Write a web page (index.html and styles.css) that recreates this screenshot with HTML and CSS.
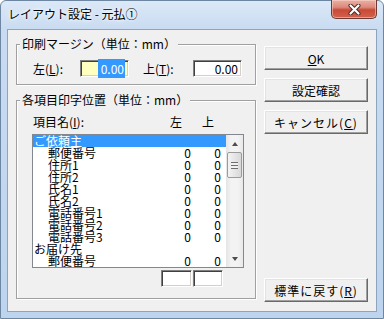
FILE: index.html
```html
<!DOCTYPE html>
<html lang="ja">
<head>
    <meta charset="UTF-8">
    <meta name="viewport" content="width=device-width, initial-scale=1.0">
    <title>レイアウト設定 - 元払①</title>
    <link rel="stylesheet" href="styles.css">
</head>
<body>

    <div class="window">
        <div class="titlebar">
            <span class="title">レイアウト設定 - 元払①</span>
            <span class="close-btn">
                <svg width="13" height="11" viewBox="0 0 13 11">
                    <path d="M2.5 1.5 L10.5 9.5 M10.5 1.5 L2.5 9.5" stroke="#4a2420" stroke-width="4" stroke-linecap="round"/>
                    <path d="M2.5 1.5 L10.5 9.5 M10.5 1.5 L2.5 9.5" stroke="#ffffff" stroke-width="2.2" stroke-linecap="round"/>
                </svg>
            </span>
        </div>

        <div class="client">
            <div class="left-col">
                <fieldset class="group group-margin">
                    <legend>印刷マージン（単位：mm）</legend>
                    <div class="margin-row">
                        <label class="lbl lbl-left">左(<u>L</u>):</label>
                        <span class="edit edit-focus"><span class="sel">0.00</span></span>
                        <label class="lbl lbl-top">上(<u>T</u>):</label>
                        <span class="edit">0.00</span>
                    </div>
                </fieldset>

                <fieldset class="group group-items">
                    <legend>各項目印字位置（単位：mm）</legend>
                    <div class="items-body">
                        <div class="list-head">
                            <span class="head-name">項目名(<u>I</u>):</span>
                            <span class="head-col">左</span>
                            <span class="head-col">上</span>
                        </div>

                        <div class="listbox">
                            <ul class="rows">
                                <li class="row selected"><span class="name">ご依頼主</span></li>
                                <li class="row child"><span class="name">郵便番号</span><span class="val">0</span><span class="val">0</span></li>
                                <li class="row child"><span class="name">住所1</span><span class="val">0</span><span class="val">0</span></li>
                                <li class="row child"><span class="name">住所2</span><span class="val">0</span><span class="val">0</span></li>
                                <li class="row child"><span class="name">氏名1</span><span class="val">0</span><span class="val">0</span></li>
                                <li class="row child"><span class="name">氏名2</span><span class="val">0</span><span class="val">0</span></li>
                                <li class="row child"><span class="name">電話番号1</span><span class="val">0</span><span class="val">0</span></li>
                                <li class="row child"><span class="name">電話番号2</span><span class="val">0</span><span class="val">0</span></li>
                                <li class="row child"><span class="name">電話番号3</span><span class="val">0</span><span class="val">0</span></li>
                                <li class="row"><span class="name">お届け先</span></li>
                                <li class="row child"><span class="name">郵便番号</span><span class="val">0</span><span class="val">0</span></li>
                            </ul>
                            <div class="vscroll">
                                <div class="arrow arrow-up"></div>
                                <div class="thumb"><span class="grip"></span></div>
                                <div class="track"></div>
                                <div class="arrow arrow-down"></div>
                            </div>
                        </div>

                        <div class="cell-edits">
                            <span class="edit small"></span>
                            <span class="edit small"></span>
                        </div>
                    </div>
                </fieldset>
            </div>

            <div class="buttons">
                <button type="button"><u>O</u>K</button>
                <button type="button">設定確認</button>
                <button type="button" class="wide">キャンセル(<u>C</u>)</button>
                <button type="button" class="wide reset">標準に戻す(<u>R</u>)</button>
            </div>
        </div>
    </div>

</body>
</html>
```

FILE: styles.css
```css
* {
    box-sizing: border-box;
}
body {
    margin: 0;
    background: #ffffff;
    font-family: "Noto Sans CJK JP", "Noto Sans", sans-serif;
    font-size: 12px;
    color: #000;
}
.window {
    width: 384px;
    height: 319px;
    display: flex;
    flex-direction: column;
    padding: 0 6px 6px;
    border: 1px solid #6d87a3;
    border-radius: 6px 6px 0 0;
    background: linear-gradient(#dbe8f7, #c8dbf1 30px, #bed4ee);
}
.titlebar {
    height: 28px;
    display: flex;
    align-items: flex-start;
}
.title {
    padding: 6px 0 0 1px;
    line-height: 14px;
    text-shadow: 0 0 6px #fff, 0 0 3px #fff;
}
.close-btn {
    margin-left: auto;
    width: 46px;
    height: 19px;
    margin-top: -1px;
    display: flex;
    align-items: center;
    justify-content: center;
    border: 1px solid #6e3a33;
    border-top: none;
    border-radius: 0 0 5px 5px;
    background: linear-gradient(#eab1a5, #dc8a7b 40%, #c84a36 55%, #d2624e);
    box-shadow: inset 0 0 0 1px rgba(255, 220, 210, 0.5);
}
.client {
    flex: 1;
    display: flex;
    background: #f0f0f0;
    border: 1px solid #8da4bd;
}
.left-col {
    width: 240px;
    margin-left: 8px;
    padding-top: 8px;
}
.group {
    margin: 0;
    padding: 0;
    border: 1px solid #a0a0a0;
    box-shadow: 1px 1px 0 #fff, inset 1px 1px 0 #fff;
}
.group legend {
    margin-left: 3px;
    padding: 0 2px;
    line-height: 12px;
    background: #f0f0f0;
}
.group-margin {
    height: 47px;
}
.margin-row {
    display: flex;
    align-items: center;
    padding: 10px 0 0 16px;
}
.lbl {
    line-height: 17px;
}
.lbl-left {
    width: 47px;
}
.lbl-top {
    width: 50px;
    margin-left: 14px;
}
.edit {
    display: block;
    height: 17px;
    width: 49px;
    padding-right: 3px;
    text-align: right;
    line-height: 15px;
    background: #fff;
    border: 1px solid;
    border-color: #808080 #fff #fff #808080;
    box-shadow: inset 1px 1px 0 #404040, inset -1px -1px 0 #d4d0c8;
}
.edit-focus {
    background: #ffffc0;
}
.sel {
    background: #3399ff;
    color: #fff;
    padding: 1px 1px 1px 3px;
}
.group-items {
    height: 205px;
    margin-top: 9px;
}
.items-body {
    padding: 10px 0 0 15px;
}
.list-head {
    display: flex;
    line-height: 12px;
    padding-left: 1px;
}
.head-name {
    width: 137px;
}
.head-col {
    width: 32px;
}
.listbox {
    display: flex;
    width: 212px;
    height: 134px;
    margin-top: 6px;
    background: #fff;
    border: 1px solid #828790;
}
.rows {
    list-style: none;
    margin: 0;
    padding: 0;
    flex: 1;
}
.row {
    display: flex;
    height: 12px;
    line-height: 12px;
    padding: 0 5px 0 1px;
}
.row.child {
    padding-left: 15px;
}
.row.selected {
    background: #3399ff;
    color: #fff;
}
.row .name {
    flex: 1;
}
.row .val {
    width: 30px;
    text-align: right;
}
.vscroll {
    width: 17px;
    display: flex;
    flex-direction: column;
    background: linear-gradient(to right, #e4e4e4, #f3f3f3 30%, #f3f3f3 70%, #e8e8e8);
}
.arrow {
    height: 17px;
    display: flex;
    align-items: center;
    justify-content: center;
}
.arrow::before {
    content: "";
    border-left: 3.5px solid transparent;
    border-right: 3.5px solid transparent;
}
.arrow-up::before {
    border-bottom: 4px solid #4d4d4d;
}
.arrow-down::before {
    border-top: 4px solid #4d4d4d;
}
.thumb {
    height: 26px;
    margin: 0 1px;
    display: flex;
    align-items: center;
    justify-content: center;
    border: 1px solid #9b9b9b;
    border-radius: 2px;
    background: linear-gradient(to right, #f4f4f4, #e6e6e6 50%, #d8d8d8);
}
.grip {
    width: 7px;
    height: 7px;
    background: repeating-linear-gradient(#6d6d6d 0 1px, #f0f0f0 1px 3px);
}
.track {
    flex: 1;
}
.cell-edits {
    display: flex;
    margin: 2px 0 0 129px;
}
.edit.small {
    width: 31px;
}
.edit.small + .edit.small {
    width: 30px;
    margin-left: 1px;
}
.buttons {
    display: flex;
    flex-direction: column;
    gap: 8px;
    margin-left: 8px;
    padding: 16px 0 9px;
}
button {
    width: 104px;
    height: 24px;
    padding: 0;
    font-family: inherit;
    font-size: 12px;
    color: #000;
    background: #f0f0f0;
    border: 1px solid;
    border-color: #fff #696969 #696969 #fff;
    box-shadow: inset -1px -1px 0 #a0a0a0, inset 1px 1px 0 #e3e3e3;
}
button.wide {
    letter-spacing: 1px;
}
button.reset {
    margin-top: auto;
}
```
